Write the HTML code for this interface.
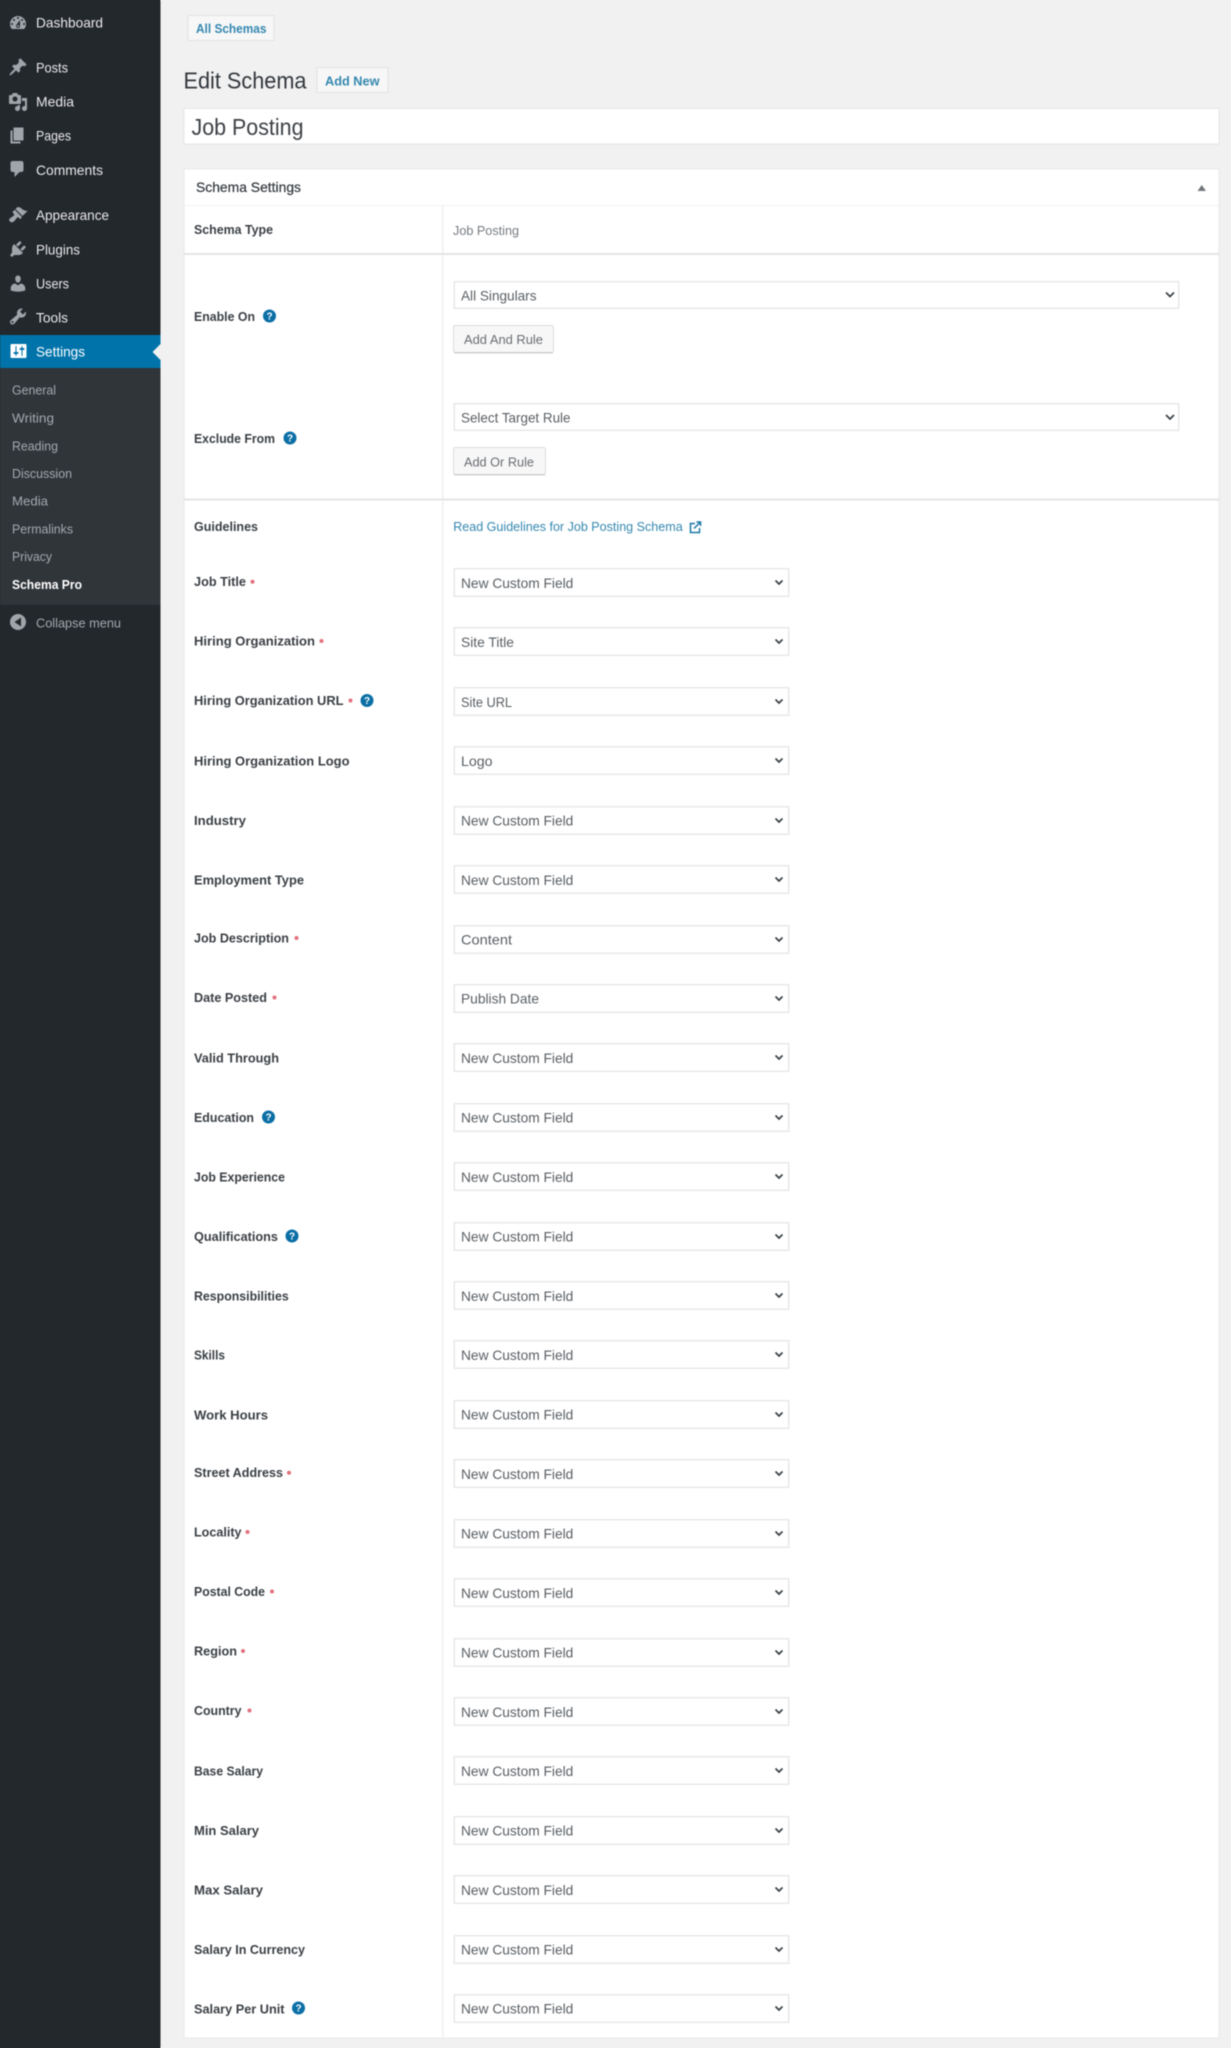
<!DOCTYPE html>
<html lang="en"><head><meta charset="utf-8"><title>Edit Schema</title>
<style>
html,body{margin:0;padding:0;width:1231px;height:2048px;overflow:hidden;background:linear-gradient(90deg,#23282d 160px,#f1f1f1 160px)}
svg{display:block;filter:blur(.4px)}
text{font-family:"Liberation Sans",sans-serif}
.m{font-size:14px;fill:#e8e8e8}
.s{font-size:13px;fill:#a4a9ae}
.l{font-size:13px;font-weight:700;fill:#3a3f44}
.v{font-size:14px;fill:#5a5f64}
.b{font-size:13px;font-weight:700;fill:#3588b0}
.h{font-size:10px;font-weight:700;fill:#fff;text-anchor:middle}
.i{fill:#a0a5aa}
</style></head><body>
<svg xmlns="http://www.w3.org/2000/svg" width="1231" height="2048" viewBox="0 0 1231 2048">
<defs>
<g id="box"><rect x="453.5" y="0" width="336" height="29" fill="#e8e8e8"/><rect x="455" y="1.5" width="333" height="26" fill="#fff"/><path d="M775.5 12.5L779 16L782.5 12.5" fill="none" stroke="#3c4146" stroke-width="1.7"/></g>
<g id="help"><circle r="6.5" fill="#0b6fa6"/><text class="h" y="3.5">?</text></g>
</defs>
<rect width="1231" height="2048" fill="#f1f1f1"/>

<!-- sidebar -->
<rect width="160.5" height="2048" fill="#23282d"/>
<rect y="368" width="160.5" height="237" fill="#30353a"/>
<rect y="335" width="160.5" height="33" fill="#0073aa"/>
<path d="M161 343.5L152.5 352L161 360.5z" fill="#f1f1f1"/>

<path class="i" transform="translate(8,13)" d="M3.760 16h12.480c1.100-1.370 1.760-3.110 1.760-5 0-4.420-3.580-8-8-8s-8 3.580-8 8c0 1.890.66 3.630 1.760 5zM10 4c.55 0 1 .45 1 1s-.45 1-1 1-1-.45-1-1 .45-1 1-1zM6 6c.55 0 1 .45 1 1s-.45 1-1 1-1-.45-1-1 .45-1 1-1zm8 0c.55 0 1 .45 1 1s-.45 1-1 1-1-.45-1-1 .45-1 1-1zm-5.370 5.550L12 7v6c0 1.100-.9 2-2 2s-2-.9-2-2c0-.57.24-1.080.63-1.450zM4 10c.55 0 1 .45 1 1s-.45 1-1 1-1-.45-1-1 .45-1 1-1zm12 0c.55 0 1 .45 1 1s-.45 1-1 1-1-.45-1-1 .45-1 1-1zm-5 3c0-.55-.45-1-1-1s-1 .45-1 1 .45 1 1 1 1-.45 1-1z"/>
<path class="i" transform="translate(8,57)" d="M10.440 3.020l1.820-1.820 6.360 6.350-1.830 1.820c-1.050-.68-2.480-.57-3.410.36l-.75.75c-.92.93-1.040 2.350-.35 3.410l-1.830 1.820-2.410-2.410-2.800 2.790c-.42.42-3.380 2.710-3.800 2.290s1.860-3.390 2.280-3.810l2.790-2.790L4.100 9.360l1.830-1.820c1.050.69 2.480.57 3.400-.36l.75-.75c.93-.92 1.050-2.350.36-3.410z"/>
<path class="i" transform="translate(8,92)" d="M13 11V4c0-.55-.45-1-1-1h-1.670L9 1H5L3.670 3H2c-.55 0-1 .45-1 1v7c0 .55.45 1 1 1h10c.55 0 1-.45 1-1zM7 4.500c1.380 0 2.500 1.120 2.500 2.500S8.380 9.500 7 9.500 4.500 8.380 4.500 7 5.620 4.500 7 4.500zM14 6h5v10.500c0 1.380-1.120 2.500-2.500 2.500S14 17.880 14 16.500s1.120-2.500 2.500-2.500c.17 0 .34.02.5.05V9h-3V6zm-4 8.050V13h2v3.500c0 1.380-1.120 2.500-2.500 2.500S7 17.880 7 16.500 8.120 14 9.500 14c.17 0 .34.02.5.05z"/>
<path class="i" transform="translate(7.5,125.5)" d="M6 15V2h10v13H6zm-1 1h8v2H3V5h2v11z"/>
<path class="i" transform="translate(7.5,159)" d="M5 2h9c1.100 0 2 .9 2 2v7c0 1.100-.9 2-2 2h-2l-5 5v-5H5c-1.100 0-2-.9-2-2V4c0-1.100.9-2 2-2z"/>
<path class="i" transform="translate(8,205)" d="M14.480 11.060L7.410 3.990l1.500-1.500c.5-.56 2.300-.47 3.510.32 1.210.8 1.430 1.280 2.910 2.100 1.180.64 2.450 1.260 4.450.85zm-.71.71L6.700 4.700 4.930 6.470c-.39.39-.39 1.020 0 1.410l1.060 1.060c.39.39.39 1.030 0 1.420-.6.6-1.430 1.110-2.210 1.690-.35.26-.7.53-1.010.84C1.430 13.230.5 15.070 1.990 16.560c1.500 1.490 3.330.56 4.670-.78.31-.31.58-.66.84-1.010.58-.78 1.090-1.610 1.690-2.210.39-.39 1.030-.39 1.420 0l1.060 1.060c.39.39 1.020.39 1.410 0z"/>
<path class="i" transform="translate(8,239)" d="M13.110 4.360L9.870 7.600 8 5.730l3.240-3.240c.35-.34 1.050-.2 1.560.32.52.51.66 1.210.31 1.550zm-8 1.770l.91-1.120 9.010 9.010-1.190.84c-.71.71-2.630 1.160-3.820 1.160H6.140L4.900 17.260c-.59.59-1.540.59-2.120 0-.59-.58-.59-1.530 0-2.120l1.240-1.240v-3.880c0-1.130.4-3.190 1.090-3.890zm7.260 3.970l3.240-3.240c.34-.35 1.040-.21 1.550.31.52.51.66 1.210.31 1.550l-3.240 3.250z"/>
<path class="i" transform="translate(8,273.5)" d="M10 9.250c-2.270 0-2.730-3.440-2.730-3.440C7 4.020 7.820 2 9.970 2c2.160 0 2.980 2.020 2.710 3.810 0 0-.41 3.440-2.680 3.440zm0 2.570L12.720 10c2.390 0 4.520 2.330 4.520 4.530v2.490s-3.650 1.130-7.240 1.130c-3.650 0-7.240-1.130-7.240-1.130v-2.490c0-2.250 1.940-4.480 4.470-4.480z"/>
<path class="i" transform="translate(8,306.5)" d="M16.680 9.770c-1.340 1.340-3.300 1.670-4.950.99l-5.410 6.520c-.99.99-2.590.99-3.580 0s-.99-2.590 0-3.570l6.520-5.420c-.68-1.650-.35-3.610.99-4.950 1.280-1.280 3.120-1.620 4.720-1.060l-2.890 2.890 2.820 2.820 2.860-2.870c.53 1.580.18 3.390-1.080 4.650zM3.810 16.210c.4.39 1.040.39 1.430 0 .4-.4.4-1.040 0-1.430-.39-.4-1.030-.4-1.430 0-.39.39-.39 1.030 0 1.430z"/>
<path transform="translate(8.5,341)" fill="#fff" d="M18 16V4c0-.55-.45-1-1-1H3c-.55 0-1 .45-1 1v12c0 .55.45 1 1 1h14c.55 0 1-.45 1-1zM8 11h1c.55 0 1 .45 1 1s-.45 1-1 1H8v1.500c0 .28-.22.5-.5.5s-.5-.22-.5-.5V13H6c-.55 0-1-.45-1-1s.45-1 1-1h1V5.500c0-.28.22-.5.5-.5s.5.22.5.5V11zm5-2h-1c-.55 0-1-.45-1-1s.45-1 1-1h1V5.500c0-.28.22-.5.5-.5s.5.22.5.5V7h1c.55 0 1 .45 1 1s-.45 1-1 1h-1v5.500c0 .28-.22.5-.5.5s-.5-.22-.5-.5V9z"/>

<text class="m" x="36" y="27.3" textLength="67" lengthAdjust="spacingAndGlyphs">Dashboard</text>
<text class="m" x="36" y="72.3" textLength="32" lengthAdjust="spacingAndGlyphs">Posts</text>
<text class="m" x="36" y="106.3" textLength="38" lengthAdjust="spacingAndGlyphs">Media</text>
<text class="m" x="36" y="140.3" textLength="35" lengthAdjust="spacingAndGlyphs">Pages</text>
<text class="m" x="36" y="175.2" textLength="67" lengthAdjust="spacingAndGlyphs">Comments</text>
<text class="m" x="36" y="220.2" textLength="73" lengthAdjust="spacingAndGlyphs">Appearance</text>
<text class="m" x="36" y="254.3" textLength="44" lengthAdjust="spacingAndGlyphs">Plugins</text>
<text class="m" x="36" y="288.3" textLength="33" lengthAdjust="spacingAndGlyphs">Users</text>
<text class="m" x="36" y="322.3" textLength="32" lengthAdjust="spacingAndGlyphs">Tools</text>
<text class="m" x="36" y="356.5" textLength="49" lengthAdjust="spacingAndGlyphs" style="fill:#fff">Settings</text>

<text class="s" x="12" y="394.5" textLength="44" lengthAdjust="spacingAndGlyphs">General</text>
<text class="s" x="12" y="422.5" textLength="42" lengthAdjust="spacingAndGlyphs">Writing</text>
<text class="s" x="12" y="450.3" textLength="46" lengthAdjust="spacingAndGlyphs">Reading</text>
<text class="s" x="12" y="478" textLength="60" lengthAdjust="spacingAndGlyphs">Discussion</text>
<text class="s" x="12" y="505.5" textLength="36" lengthAdjust="spacingAndGlyphs">Media</text>
<text class="s" x="12" y="533.5" textLength="61" lengthAdjust="spacingAndGlyphs">Permalinks</text>
<text class="s" x="12" y="561" textLength="40" lengthAdjust="spacingAndGlyphs">Privacy</text>
<text class="s" x="12" y="589" textLength="70" lengthAdjust="spacingAndGlyphs" style="fill:#fff;font-weight:700">Schema Pro</text>

<circle cx="18" cy="622" r="8" fill="#a0a5aa"/><path d="M21 617.5L14.5 622L21 626.5z" fill="#23282d"/>
<text class="s" x="36" y="627.5" textLength="85" lengthAdjust="spacingAndGlyphs">Collapse menu</text>

<!-- header -->
<rect x="188" y="15.5" width="86" height="25" fill="#f7f7f7" stroke="#dfe1e3"/>
<text class="b" x="196" y="33" textLength="70.5" lengthAdjust="spacingAndGlyphs">All Schemas</text>
<text x="183.5" y="88.5" font-size="23" fill="#32373c" textLength="123" lengthAdjust="spacingAndGlyphs">Edit Schema</text>
<rect x="317" y="67.5" width="71" height="25" fill="#f7f7f7" stroke="#dfe1e3"/>
<text class="b" x="325" y="85.5" textLength="54.5" lengthAdjust="spacingAndGlyphs">Add New</text>
<rect x="184" y="108.5" width="1035" height="35.5" fill="#fff" stroke="#e6e6e6"/>
<text x="191.5" y="135" font-size="23" fill="#3c4146" textLength="112" lengthAdjust="spacingAndGlyphs">Job Posting</text>

<!-- postbox -->
<rect x="184" y="169" width="1035" height="1869" fill="#fff" stroke="#e8e8e8"/>
<rect x="184" y="205" width="1035" height="1" fill="#f3f3f3"/>
<rect x="442" y="206" width="1.5" height="1831" fill="#efefef"/>
<rect x="184" y="253" width="1035" height="2" fill="#e4e4e4"/>
<rect x="184" y="498.5" width="1035" height="2" fill="#e4e4e4"/>
<text x="196" y="192" font-size="14" fill="#32373c" stroke="#32373c" stroke-width=".2" textLength="105" lengthAdjust="spacingAndGlyphs">Schema Settings</text>
<path d="M1197.5 191L1201.7 185L1206 191z" fill="#72777c"/>

<text class="l" x="194" y="234" textLength="79" lengthAdjust="spacingAndGlyphs">Schema Type</text>
<text x="453" y="235" font-size="12.5" fill="#767b80" textLength="66" lengthAdjust="spacingAndGlyphs">Job Posting</text>

<text class="l" x="194" y="321" textLength="61" lengthAdjust="spacingAndGlyphs">Enable On</text>
<use href="#help" x="269.5" y="316"/>
<rect x="453.5" y="281" width="726" height="28" fill="#e8e8e8"/><rect x="455" y="282.5" width="723" height="25" fill="#fff"/>
<path d="M1166 292.5L1170 296.5L1174 292.5" fill="none" stroke="#3c4146" stroke-width="1.7"/>
<text class="v" x="461" y="300.5" textLength="75.5" lengthAdjust="spacingAndGlyphs">All Singulars</text>
<rect x="453.5" y="325.5" width="100" height="27" rx="2" fill="#f7f7f7" stroke="#dcdcdc"/><rect x="454" y="352" width="99" height="1.5" fill="#cfcfcf"/>
<text x="464" y="344" font-size="13" fill="#696e73" textLength="79" lengthAdjust="spacingAndGlyphs">Add And Rule</text>

<text class="l" x="194" y="443" textLength="81" lengthAdjust="spacingAndGlyphs">Exclude From</text>
<use href="#help" x="290" y="438"/>
<rect x="453.5" y="403" width="726" height="28" fill="#e8e8e8"/><rect x="455" y="404.5" width="723" height="25" fill="#fff"/>
<path d="M1166 415L1170 419L1174 415" fill="none" stroke="#3c4146" stroke-width="1.7"/>
<text class="v" x="461" y="422.5" textLength="109.5" lengthAdjust="spacingAndGlyphs">Select Target Rule</text>
<rect x="453.5" y="447.5" width="92" height="27" rx="2" fill="#f7f7f7" stroke="#dcdcdc"/><rect x="454" y="474" width="91" height="1.5" fill="#cfcfcf"/>
<text x="464" y="466.5" font-size="13" fill="#696e73" textLength="70" lengthAdjust="spacingAndGlyphs">Add Or Rule</text>

<text class="l" x="194" y="531" textLength="64" lengthAdjust="spacingAndGlyphs">Guidelines</text>
<text x="453.2" y="531" font-size="13" fill="#3588b0" textLength="229.5" lengthAdjust="spacingAndGlyphs">Read Guidelines for Job Posting Schema</text>
<g fill="none" stroke="#1b78a6" stroke-width="1.5"><path d="M695 523.5H690.5V532.5H699.5V528"/><path d="M694 528.5L700 522.5M696.5 522H700.5V526"/></g>

<g transform="translate(0,568)"><use href="#box"/><text class="l" x="194" y="18" textLength="52" lengthAdjust="spacingAndGlyphs">Job Title</text><circle cx="252.5" cy="13.7" r="2" fill="#e2707c"/><text class="v" x="461" y="19.8" textLength="112.3" lengthAdjust="spacingAndGlyphs">New Custom Field</text></g>
<g transform="translate(0,627)"><use href="#box"/><text class="l" x="194" y="18.3" textLength="121" lengthAdjust="spacingAndGlyphs">Hiring Organization</text><circle cx="321.5" cy="14" r="2" fill="#e2707c"/><text class="v" x="461" y="19.8" textLength="53" lengthAdjust="spacingAndGlyphs">Site Title</text></g>
<g transform="translate(0,687)"><use href="#box"/><text class="l" x="194" y="18" textLength="149.5" lengthAdjust="spacingAndGlyphs">Hiring Organization URL</text><circle cx="350.5" cy="13.5" r="2" fill="#e2707c"/><use href="#help" x="367" y="13.5"/><text class="v" x="461" y="19.8" textLength="51" lengthAdjust="spacingAndGlyphs">Site URL</text></g>
<g transform="translate(0,746)"><use href="#box"/><text class="l" x="194" y="19.5" textLength="155.5" lengthAdjust="spacingAndGlyphs">Hiring Organization Logo</text><text class="v" x="461" y="19.8" textLength="31.5" lengthAdjust="spacingAndGlyphs">Logo</text></g>
<g transform="translate(0,806)"><use href="#box"/><text class="l" x="194" y="19" textLength="52" lengthAdjust="spacingAndGlyphs">Industry</text><text class="v" x="461" y="19.3" textLength="112.3" lengthAdjust="spacingAndGlyphs">New Custom Field</text></g>
<g transform="translate(0,865)"><use href="#box"/><text class="l" x="194" y="19.5" textLength="110" lengthAdjust="spacingAndGlyphs">Employment Type</text><text class="v" x="461" y="19.8" textLength="112.3" lengthAdjust="spacingAndGlyphs">New Custom Field</text></g>
<g transform="translate(0,925)"><use href="#box"/><text class="l" x="194" y="17.7" textLength="95" lengthAdjust="spacingAndGlyphs">Job Description</text><circle cx="296.5" cy="13" r="2" fill="#e2707c"/><text class="v" x="461" y="19.3" textLength="51" lengthAdjust="spacingAndGlyphs">Content</text></g>
<g transform="translate(0,984)"><use href="#box"/><text class="l" x="194" y="18" textLength="73" lengthAdjust="spacingAndGlyphs">Date Posted</text><circle cx="274.5" cy="13.5" r="2" fill="#e2707c"/><text class="v" x="461" y="19.3" textLength="78" lengthAdjust="spacingAndGlyphs">Publish Date</text></g>
<g transform="translate(0,1043)"><use href="#box"/><text class="l" x="194" y="19.7" textLength="85" lengthAdjust="spacingAndGlyphs">Valid Through</text><text class="v" x="461" y="19.8" textLength="112.3" lengthAdjust="spacingAndGlyphs">New Custom Field</text></g>
<g transform="translate(0,1103)"><use href="#box"/><text class="l" x="194" y="19.2" textLength="60" lengthAdjust="spacingAndGlyphs">Education</text><use href="#help" x="268.5" y="14"/><text class="v" x="461" y="19.3" textLength="112.3" lengthAdjust="spacingAndGlyphs">New Custom Field</text></g>
<g transform="translate(0,1162)"><use href="#box"/><text class="l" x="194" y="19.7" textLength="91" lengthAdjust="spacingAndGlyphs">Job Experience</text><text class="v" x="461" y="19.8" textLength="112.3" lengthAdjust="spacingAndGlyphs">New Custom Field</text></g>
<g transform="translate(0,1222)"><use href="#box"/><text class="l" x="194" y="19.2" textLength="84" lengthAdjust="spacingAndGlyphs">Qualifications</text><use href="#help" x="292" y="14"/><text class="v" x="461" y="19.3" textLength="112.3" lengthAdjust="spacingAndGlyphs">New Custom Field</text></g>
<g transform="translate(0,1281)"><use href="#box"/><text class="l" x="194" y="19.7" textLength="94.7" lengthAdjust="spacingAndGlyphs">Responsibilities</text><text class="v" x="461" y="19.8" textLength="112.3" lengthAdjust="spacingAndGlyphs">New Custom Field</text></g>
<g transform="translate(0,1340)"><use href="#box"/><text class="l" x="194" y="19.7" textLength="31" lengthAdjust="spacingAndGlyphs">Skills</text><text class="v" x="461" y="19.8" textLength="112.3" lengthAdjust="spacingAndGlyphs">New Custom Field</text></g>
<g transform="translate(0,1400)"><use href="#box"/><text class="l" x="194" y="19.3" textLength="74" lengthAdjust="spacingAndGlyphs">Work Hours</text><text class="v" x="461" y="19.3" textLength="112.3" lengthAdjust="spacingAndGlyphs">New Custom Field</text></g>
<g transform="translate(0,1459)"><use href="#box"/><text class="l" x="194" y="18.2" textLength="89" lengthAdjust="spacingAndGlyphs">Street Address</text><circle cx="289" cy="13.7" r="2" fill="#e2707c"/><text class="v" x="461" y="19.8" textLength="112.3" lengthAdjust="spacingAndGlyphs">New Custom Field</text></g>
<g transform="translate(0,1519)"><use href="#box"/><text class="l" x="194" y="17.5" textLength="47.5" lengthAdjust="spacingAndGlyphs">Locality</text><circle cx="247.5" cy="13" r="2" fill="#e2707c"/><text class="v" x="461" y="19.3" textLength="112.3" lengthAdjust="spacingAndGlyphs">New Custom Field</text></g>
<g transform="translate(0,1578)"><use href="#box"/><text class="l" x="194" y="18" textLength="71" lengthAdjust="spacingAndGlyphs">Postal Code</text><circle cx="272" cy="13.5" r="2" fill="#e2707c"/><text class="v" x="461" y="19.8" textLength="112.3" lengthAdjust="spacingAndGlyphs">New Custom Field</text></g>
<g transform="translate(0,1638)"><use href="#box"/><text class="l" x="194" y="17.5" textLength="43" lengthAdjust="spacingAndGlyphs">Region</text><circle cx="243" cy="13" r="2" fill="#e2707c"/><text class="v" x="461" y="19.3" textLength="112.3" lengthAdjust="spacingAndGlyphs">New Custom Field</text></g>
<g transform="translate(0,1697)"><use href="#box"/><text class="l" x="194" y="18" textLength="47.5" lengthAdjust="spacingAndGlyphs">Country</text><circle cx="249.5" cy="13.5" r="2" fill="#e2707c"/><text class="v" x="461" y="19.8" textLength="112.3" lengthAdjust="spacingAndGlyphs">New Custom Field</text></g>
<g transform="translate(0,1756)"><use href="#box"/><text class="l" x="194" y="19.7" textLength="69" lengthAdjust="spacingAndGlyphs">Base Salary</text><text class="v" x="461" y="19.8" textLength="112.3" lengthAdjust="spacingAndGlyphs">New Custom Field</text></g>
<g transform="translate(0,1816)"><use href="#box"/><text class="l" x="194" y="19" textLength="65" lengthAdjust="spacingAndGlyphs">Min Salary</text><text class="v" x="461" y="19.3" textLength="112.3" lengthAdjust="spacingAndGlyphs">New Custom Field</text></g>
<g transform="translate(0,1875)"><use href="#box"/><text class="l" x="194" y="19.7" textLength="69" lengthAdjust="spacingAndGlyphs">Max Salary</text><text class="v" x="461" y="19.8" textLength="112.3" lengthAdjust="spacingAndGlyphs">New Custom Field</text></g>
<g transform="translate(0,1935)"><use href="#box"/><text class="l" x="194" y="19" textLength="111" lengthAdjust="spacingAndGlyphs">Salary In Currency</text><text class="v" x="461" y="19.3" textLength="112.3" lengthAdjust="spacingAndGlyphs">New Custom Field</text></g>
<g transform="translate(0,1994)"><use href="#box"/><text class="l" x="194" y="19.4" textLength="90.5" lengthAdjust="spacingAndGlyphs">Salary Per Unit</text><use href="#help" x="298.5" y="14"/><text class="v" x="461" y="19.5" textLength="112.3" lengthAdjust="spacingAndGlyphs">New Custom Field</text></g>
</svg>
</body></html>
